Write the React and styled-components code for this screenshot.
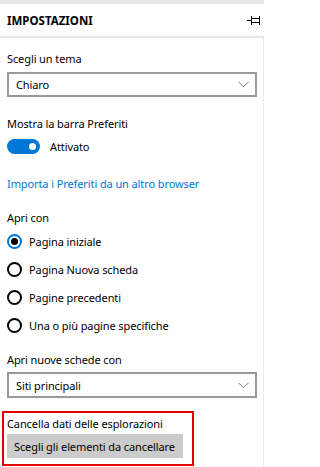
import React from "react";
import styled, { createGlobalStyle } from "styled-components";

const Global = createGlobalStyle`
  html, body { margin: 0; padding: 0; background: #fff; }
  body { font-family: "Noto Sans", "Open Sans", sans-serif; color: #000; }
  * { box-sizing: border-box; }
`;

const Panel = styled.div`
  width: 264px;
  height: 467px;
  overflow: hidden;
  display: flex;
  flex-direction: column;
  background: #fff;
  white-space: nowrap;
  font-size: 11px;
  letter-spacing: -0.1px;
`;

const TopStrip = styled.div`
  flex-shrink: 0;
  height: 4px;
  background: #e8e8e8;
`;

const Header = styled.div`
  flex-shrink: 0;
  height: 34px;
  display: flex;
  align-items: center;
  justify-content: space-between;
  padding: 0 2px 0 7px;
  border-bottom: 2px solid #e6e6e6;
`;

const Title = styled.div`
  font-size: 11.5px;
  font-weight: 700;
  letter-spacing: 0;
`;

const Body = styled.div`
  flex: 1;
  width: 264px;
  border-right: 1px solid #ececec;
  padding: 11px 6px 0 7px;
  display: flex;
  flex-direction: column;
`;

const Label = styled.div`
  line-height: ${(p) => p.$lh || 20}px;
  margin-top: ${(p) => p.$mt || 0}px;
`;

const SelectBox = styled.div`
  flex-shrink: 0;
  margin-top: ${(p) => p.$mt || 0}px;
  width: 250px;
  height: ${(p) => p.$h || 25}px;
  border: 2px solid #999;
  display: flex;
  align-items: center;
  justify-content: space-between;
  padding: 0 6px 0 7px;
`;

const ToggleRow = styled.div`
  display: flex;
  align-items: center;
  height: 20px;
  margin-top: 2px;
  gap: 10px;
`;

const Toggle = styled.div`
  width: 33px;
  height: 15px;
  border-radius: 8px;
  background: #0078d7;
  position: relative;
  &::after {
    content: "";
    position: absolute;
    right: 4px;
    top: 4px;
    width: 7px;
    height: 7px;
    border-radius: 50%;
    background: #fff;
  }
`;

const Link = styled.div`
  line-height: 20px;
  margin-top: 18px;
  color: #0078d7;
`;

const RadioList = styled.div`
  display: flex;
  flex-direction: column;
`;

const RadioRow = styled.div`
  height: 28px;
  display: flex;
  align-items: center;
  gap: 7px;
`;

const Radio = styled.div`
  width: 15px;
  height: 15px;
  border-radius: 50%;
  border: 2px solid ${(p) => (p.$on ? "#0078d7" : "#000")};
  display: flex;
  align-items: center;
  justify-content: center;
  &::after {
    content: "";
    display: ${(p) => (p.$on ? "block" : "none")};
    width: 7px;
    height: 7px;
    border-radius: 50%;
    background: #000;
  }
`;

const Highlight = styled.div`
  flex-shrink: 0;
  margin-top: 13px;
  margin-left: -5px;
  width: 192px;
  border: 2px solid #e60000;
  padding: 1px 0 6px 3px;
  display: flex;
  flex-direction: column;
`;

const GrayButton = styled.div`
  width: 176px;
  height: 24px;
  background: #cccccc;
  display: flex;
  align-items: center;
  padding-left: 7px;
`;

const Chevron = () => (
  <svg width="11" height="7" viewBox="0 0 11 7">
    <polyline points="0.5,0.8 5.5,5.8 10.5,0.8" fill="none" stroke="#7a7a7a" strokeWidth="1" />
  </svg>
);

const Pin = () => (
  <svg width="15" height="11" viewBox="0 0 15 11">
    <g fill="none" stroke="#000" strokeWidth="1">
      <line x1="0" y1="5.5" x2="4" y2="5.5" />
      <line x1="4.5" y1="1" x2="4.5" y2="10" />
      <rect x="4.5" y="3.5" width="8" height="4" />
      <line x1="12.5" y1="1" x2="12.5" y2="10" />
    </g>
  </svg>
);

const radios = [
  { label: "Pagina iniziale", on: true },
  { label: "Pagina Nuova scheda" },
  { label: "Pagine precedenti" },
  { label: "Una o più pagine specifiche" },
];

export default function App() {
  return (
    <>
      <Global />
      <Panel>
        <TopStrip />
        <Header>
          <Title>IMPOSTAZIONI</Title>
          <Pin />
        </Header>
        <Body>
          <Label>Scegli un tema</Label>
          <SelectBox $mt={3}>
            <span>Chiaro</span>
            <Chevron />
          </SelectBox>
          <Label $mt={17}>Mostra la barra Preferiti</Label>
          <ToggleRow>
            <Toggle />
            <span>Attivato</span>
          </ToggleRow>
          <Link>Importa i Preferiti da un altro browser</Link>
          <Label $mt={15} $lh={18}>Apri con</Label>
          <RadioList>
            {radios.map((r) => (
              <RadioRow key={r.label}>
                <Radio $on={r.on} />
                <span>{r.label}</span>
              </RadioRow>
            ))}
          </RadioList>
          <Label $mt={11}>Apri nuove schede con</Label>
          <SelectBox $mt={2} $h={26}>
            <span>Siti principali</span>
            <Chevron />
          </SelectBox>
          <Highlight>
            <Label>Cancella dati delle esplorazioni</Label>
            <GrayButton>Scegli gli elementi da cancellare</GrayButton>
          </Highlight>
        </Body>
      </Panel>
    </>
  );
}
